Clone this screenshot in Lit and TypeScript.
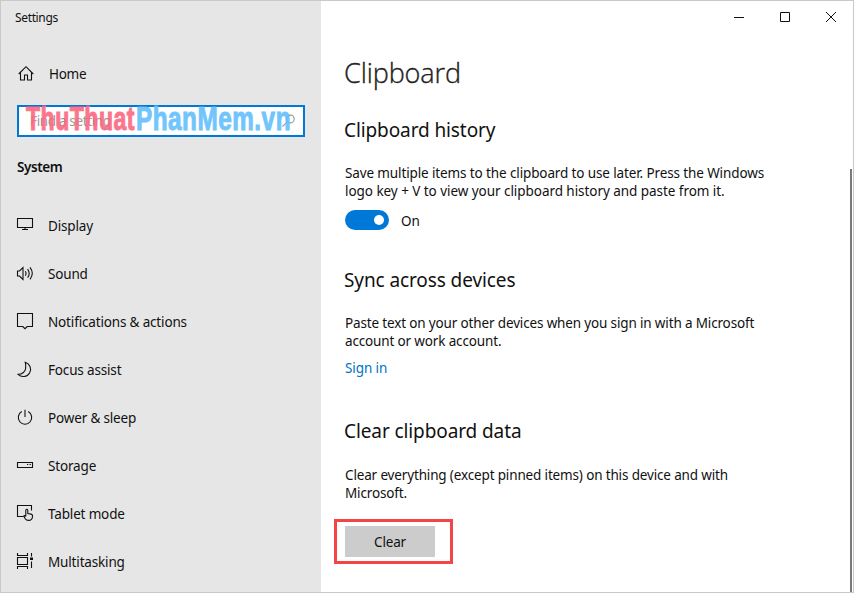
import { LitElement, html, css, svg } from "lit";
import { customElement, property } from "lit/decorators.js";

const icons: Record<string, unknown> = {
  home: svg`<path d="M1.700 9 9 1.700 16.300 9M3.500 7.500v7.500h4v-5h3v5h4V7.500"/>`,
  display: svg`<path d="M1.500 1.500h15v9h-15zM9 10.500v2M6 12.500h6"/>`,
  sound: svg`<path d="M1.500 6h2L7 2.500v12L3.500 11h-2z"/><path d="M9.300 6.200q1.500 2.200 0 4.400M11.600 4.200q3.200 4.200 0 8.400M14 2.300q4.600 6 0 12"/>`,
  notify: svg`<path d="M1.500 .5h15v13h-5.300L9 15.700 6.800 13.500H1.500z"/>`,
  focus: svg`<path d="M9.200 1.200a7.300 7.300 0 1 1-7.100 12.200Q8.300 12.800 9.600 7.800 10.200 4.600 9.200 1.200z"/>`,
  power: svg`<path d="M5.800 2.600a6.700 6.700 0 1 0 6.400 0M9 .7v7.200"/>`,
  storage: svg`<path d="M1.500 5.500h15v5h-15z"/><path d="M11 7.500h1.300M13.500 7.500h1.300"/>`,
  tablet: svg`<path d="M7.500 11.500h-6V.5h14v5"/><path d="M9.800 11.500V5.300q0-1.100 1-1.100t1 1.100V8.500l3.300.6q1.400.3 1.400 1.700v.7q-.2 3.900-3.900 3.900-2.400 0-3.400-1.700L7.700 11q.8-1 2.100.5"/>`,
  tasks: svg`<path d="M1.500 0v2.500h10V0M1.500 4.500h10v7h-10zM1.500 16v-2.500h10V16M15.500 0v3.500M15.500 8.500V15"/><path class="fill" d="M14 4.500h3v2.500h-3z"/>`,
  search: svg`<circle cx="11.300" cy="6" r="3.900"/><path d="M8.400 8.900 3.500 13.500"/>`,
};

@customElement("line-icon")
class LineIcon extends LitElement {
  @property() name = "home";
  static styles = css`
    :host { display: block; width: 18px; height: 17px; }
    svg { display: block; width: 18px; height: 17px; fill: none; stroke: currentColor; stroke-width: 1.100; }
    .fill { fill: currentColor; stroke: none; }
  `;
  render() {
    return html`<svg viewBox="0 0 18 17">${icons[this.name]}</svg>`;
  }
}

const sections = [
  ["display", "Display"],
  ["sound", "Sound"],
  ["notify", "Notifications & actions"],
  ["focus", "Focus assist"],
  ["power", "Power & sleep"],
  ["storage", "Storage"],
  ["tablet", "Tablet mode"],
  ["tasks", "Multitasking"],
];

@customElement("app-root")
class AppRoot extends LitElement {
  static styles = css`
    :host { display: block; }
    * { box-sizing: border-box; }
    h1, h2, p { margin: 0; font-weight: 400; }
    .window { position: relative; width: 854px; height: 593px; border: 1px solid #c9c9c9; display: flex; background: #fff; overflow: hidden;
      font: 13.500px/18px "Noto Sans", "Open Sans", sans-serif; color: #111; }
    .side { width: 320px; background: #e6e6e6; display: flex; flex-direction: column; }
    .title { height: 49px; padding: 8px 0 0 14px; font-size: 12px; letter-spacing: -.35px; }
    .row { height: 48px; display: flex; align-items: center; gap: 14px; padding-left: 15px; letter-spacing: -.16px; }
    .row line-icon { position: relative; top: -1px; }
    .home { height: 48px; gap: 14px; padding-left: 16px; letter-spacing: -.3px; }
    .search { position: relative; width: 288px; height: 32px; margin: 7px 0 0 16px; border: 2px solid #0078d7; background: #fff;
      display: flex; align-items: center; justify-content: space-between; padding: 0 6px 0 11px; color: #999; letter-spacing: -.35px; }
    .search line-icon { width: 18px; color: #999; }
    .mark { position: absolute; left: 5px; top: -6px; width: 272px; height: 36px; opacity: .9; letter-spacing: .7px;
      font: 700 33.500px "Liberation Sans Narrow", "Liberation Sans", sans-serif; overflow: visible; }
    .red { fill: #fb6780; stroke: #fb6780; }
    .blue { fill: #62bffc; stroke: #62bffc; }
    .group { margin: 21px 0 26px 16px; font-weight: 600; font-size: 13.500px; letter-spacing: -.4px; }
    .main { flex: 1; display: flex; flex-direction: column; align-items: flex-start; padding-left: 24px; }
    .controls { align-self: flex-end; display: flex; height: 32px; margin-right: -1px; }
    .controls svg { width: 46px; height: 32px; fill: none; stroke: #111; stroke-width: 1; }
    h1 { font: 300 27px/38px "Open Sans", sans-serif; -webkit-text-stroke: .35px #222; letter-spacing: -.1px; color: #222; margin: 21px 0 0 -1px; }
    h2 { font-size: 19px; line-height: 26px; margin-left: -1px; letter-spacing: -.1px; }
    .history { margin-top: 25px; }
    .sync { margin-top: 37px; }
    .clear { margin-top: 41px; }
    .copy { margin-top: 21px; white-space: nowrap; letter-spacing: -.15px; }
    .history-copy { letter-spacing: -.12px; }
    .key-line { letter-spacing: -.05px; }
    .clear-copy { margin-top: 22px; }
    .switch { display: flex; align-items: center; gap: 12px; height: 20px; margin-top: 10px; }
    .state { padding-top: 2px; }
    .track { width: 44px; height: 20px; border-radius: 10px; background: #0078d7; display: flex; align-items: center; justify-content: flex-end; padding-right: 5px; }
    .thumb { width: 10px; height: 10px; border-radius: 50%; background: #fff; }
    .link { color: #0072c4; margin-top: 9px; letter-spacing: -.1px; }
    .focus-box { width: 119px; height: 45px; border: 3px solid #f44444; padding: 4px 0 0 8px; margin: 17px 0 0 -11px; }
    button { width: 90px; height: 31px; border: 0; background: #ccc; color: #111; font: inherit; letter-spacing: -.2px; padding: 0; display: block; }
    .scroll { position: absolute; right: 1px; top: 168px; bottom: 0; width: 2px; background: #7a7a7a; }
  `;
  render() {
    return html`<div class="window">
      <aside class="side">
        <div class="title">Settings</div>
        <div class="row home"><line-icon name="home"></line-icon><span>Home</span></div>
        <div class="search"><span>Find a setting</span><line-icon name="search"></line-icon>
          <svg class="mark"><text class="red" x="2" y="28.500" textLength="109" lengthAdjust="spacingAndGlyphs">ThuThuat</text><text class="blue" x="112" y="28.500" textLength="155" lengthAdjust="spacingAndGlyphs">PhanMem.vn</text></svg>
        </div>
        <div class="group">System</div>
        <nav>${sections.map(([icon, label]) => html`<div class="row"><line-icon name=${icon}></line-icon><span>${label}</span></div>`)}</nav>
      </aside>
      <main class="main">
        <div class="controls">
          <svg><path d="M18 16.500h10"/></svg>
          <svg><path d="M18.500 11.500h9v9h-9z"/></svg>
          <svg><path d="m18 11 10 10m0-10L18 21"/></svg>
        </div>
        <h1>Clipboard</h1>
        <h2 class="history">Clipboard history</h2>
        <p class="copy history-copy">Save multiple items to the clipboard to use later. Press the Windows<br><span class="key-line">logo key + V to view your clipboard history and paste from it.</span></p>
        <div class="switch"><span class="track"><span class="thumb"></span></span><span class="state">On</span></div>
        <h2 class="sync">Sync across devices</h2>
        <p class="copy">Paste text on your other devices when you sign in with a Microsoft<br>account or work account.</p>
        <div class="link">Sign in</div>
        <h2 class="clear">Clear clipboard data</h2>
        <p class="copy clear-copy">Clear everything (except pinned items) on this device and with<br>Microsoft.</p>
        <div class="focus-box"><button>Clear</button></div>
      </main>
      <div class="scroll"></div>
    </div>`;
  }
}
